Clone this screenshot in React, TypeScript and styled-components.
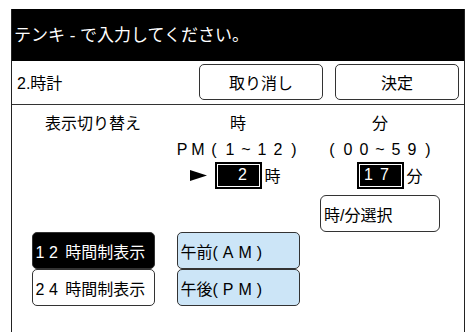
import React from 'react';
import styled, { createGlobalStyle } from 'styled-components';

const GlobalStyle = createGlobalStyle`
  html, body {
    margin: 0;
    padding: 0;
    background: #fff;
    overflow: hidden;
  }
  body {
    font-family: "Liberation Sans", "Noto Sans CJK JP", sans-serif;
    font-size: 16px;
    color: #000;
  }
`;

const Panel = styled.div`
  box-sizing: border-box;
  width: 454px;
  height: 340px;
  margin: 9px 0 0 11px;
  border-left: 1px solid #222;
  border-right: 1px solid #222;
`;

const Header = styled.div`
  box-sizing: border-box;
  height: 52px;
  padding: 0 0 3px 2px;
  display: flex;
  align-items: center;
  background: #000;
  color: #fff;
  font-size: 17px;
`;

const TopBar = styled.div`
  box-sizing: border-box;
  height: 44px;
  padding: 0 5px 1px 5px;
  display: flex;
  align-items: center;
  gap: 12px;
  border-bottom: 1px solid #333;
`;

const Title = styled.div`
  flex: 1;
`;

const ActionButton = styled.button`
  box-sizing: border-box;
  width: 124px;
  height: 36px;
  padding: 0;
  border: 1px solid #333;
  border-radius: 5px;
  background: #fff;
  color: #000;
  font: inherit;
`;

const Body = styled.div`
  display: grid;
  grid-template-columns: 142px 148px 136px;
  grid-template-rows: 34px 21px 30px 42px 74px;
  grid-template-areas:
    "modeLabel hourLabel minLabel"
    ". hourRange minRange"
    ". hourValue minValue"
    ". . select"
    "modes ampm .";
  padding-left: 10px;
`;

const Caption = styled.div<{ $area: string }>`
  grid-area: ${p => p.$area};
  display: flex;
  align-items: center;
  justify-content: center;
`;

const Cell = styled.span`
  display: inline-block;
  width: 16px;
  text-align: center;
`;

// one fixed cell per character, like the panel's full-width text
const Cells = ({ text }: { text: string }) => (
  <>
    {Array.from(text).map((c, i) => (
      <Cell key={i}>{c === ' ' ? '\u00a0' : c}</Cell>
    ))}
  </>
);

const Spread = styled.span<{ $gap: number }>`
  letter-spacing: ${p => p.$gap}px;
`;

const ValueRow = styled.div<{ $area: string }>`
  grid-area: ${p => p.$area};
  display: grid;
  grid-template-columns: 1fr auto 1fr;
  align-items: center;
`;

const Pointer = styled.svg`
  justify-self: end;
  margin-right: 8px;
`;

const ValueBox = styled.div`
  box-sizing: border-box;
  width: 47px;
  height: 27px;
  padding-left: 2px;
  display: flex;
  align-items: center;
  border: 2px solid #000;
  box-shadow: inset 0 0 0 1px #fff;
  background: #000;
  color: #fff;
`;

const Unit = styled.span`
  justify-self: start;
  margin-left: 3px;
`;

const SelectButton = styled.button`
  grid-area: select;
  align-self: end;
  justify-self: center;
  box-sizing: border-box;
  width: 120px;
  height: 37px;
  padding: 0 0 0 3px;
  border: 1px solid #333;
  border-radius: 6px;
  background: #fff;
  color: #000;
  font: inherit;
  text-align: left;
`;

const Stack = styled.div<{ $area: string }>`
  grid-area: ${p => p.$area};
  display: flex;
  flex-direction: column;
  align-items: center;
`;

const tones = {
  on: { bg: '#000', fg: '#fff' },
  off: { bg: '#fff', fg: '#000' },
  blue: { bg: '#cce5f7', fg: '#000' },
};

const ToggleButton = styled.button<{ $tone: keyof typeof tones }>`
  box-sizing: border-box;
  width: 123px;
  height: 37px;
  padding: 0 0 0 3px;
  border: 1px solid #333;
  border-radius: 5px;
  background: ${p => tones[p.$tone].bg};
  color: ${p => tones[p.$tone].fg};
  font: inherit;
  text-align: left;
  white-space: nowrap;
`;

const Digits = styled(Spread)`
  margin-right: 3px;
`;

const App = () => (
  <>
    <GlobalStyle />
    <Panel>
      <Header>テンキ - で入力してください。</Header>
      <TopBar>
        <Title>2.時計</Title>
        <ActionButton>取り消し</ActionButton>
        <ActionButton>決定</ActionButton>
      </TopBar>
      <Body>
        <Caption $area="modeLabel">表示切り替え</Caption>
        <Caption $area="hourLabel">時</Caption>
        <Caption $area="minLabel">分</Caption>

        <Caption $area="hourRange">
          <Cells text="PM(1~12)" />
        </Caption>
        <Caption $area="minRange">
          <Cells text="(00~59)" />
        </Caption>

        <ValueRow $area="hourValue">
          <Pointer width="17" height="11" viewBox="0 0 17 11">
            <polygon points="0,0 17,5.5 0,11" fill="#000" />
          </Pointer>
          <ValueBox>
            <Cells text=" 2" />
          </ValueBox>
          <Unit>時</Unit>
        </ValueRow>
        <ValueRow $area="minValue">
          <span />
          <ValueBox>
            <Cells text="17" />
          </ValueBox>
          <Unit>分</Unit>
        </ValueRow>

        <SelectButton>時/分選択</SelectButton>

        <Stack $area="modes">
          <ToggleButton $tone="on">
            <Digits $gap={4.5}>12</Digits>時間制表示
          </ToggleButton>
          <ToggleButton $tone="off">
            <Digits $gap={4.5}>24</Digits>時間制表示
          </ToggleButton>
        </Stack>
        <Stack $area="ampm">
          <ToggleButton $tone="blue">
            午前<Spread $gap={5}>(AM)</Spread>
          </ToggleButton>
          <ToggleButton $tone="blue">
            午後<Spread $gap={5}>(PM)</Spread>
          </ToggleButton>
        </Stack>
      </Body>
    </Panel>
  </>
);

export default App;
